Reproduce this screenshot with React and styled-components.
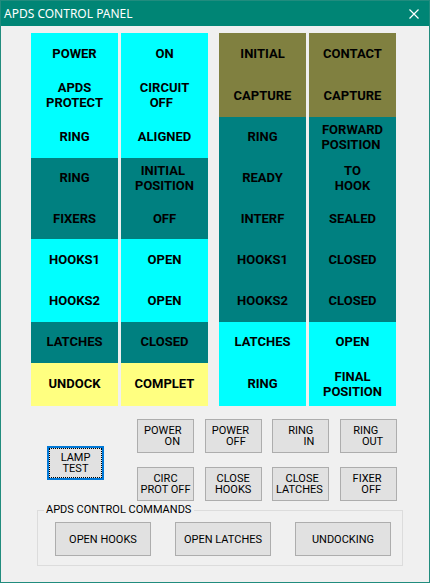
import React from "react";
import styled, { createGlobalStyle } from "styled-components";

const GlobalStyle = createGlobalStyle`
  *, *::before, *::after { box-sizing: border-box; }
  body {
    margin: 0;
    background: #f0f0f0;
    color: #000;
    font-family: Roboto, "Liberation Sans", sans-serif;
  }
`;

const lamp = {
  cyan: "#00ffff",
  teal: "#008080",
  olive: "#808040",
  yellow: "#ffff80",
};

const Window = styled.main`
  display: flex;
  flex-direction: column;
  min-height: 100vh;
  border: 1px solid #218c7e;
  background: #f0f0f0;
`;

const TitleBar = styled.header`
  display: flex;
  align-items: center;
  justify-content: space-between;
  height: 25px;
  padding: 0 10px 0 3px;
  background: #008575;
  color: #fff;
`;

const Title = styled.h1`
  margin: 0;
  font: 400 12px/16px "Noto Sans", "Open Sans", sans-serif;
`;

const CloseButton = styled.button`
  display: flex;
  padding: 0;
  border: 0;
  background: none;
  color: inherit;
`;

const Annunciator = styled.section`
  display: grid;
  grid-template-columns: 1fr 1fr;
  gap: 11px;
  padding: 7px 33px 0 30px;
`;

const LampBank = styled.div`
  display: grid;
  grid-template-columns: 1fr 1fr;
  grid-template-rows: 42px 42px 41px 41px 40px 42px 41px 41px 43px;
  column-gap: 3px;
`;

const Lamp = styled.div`
  display: flex;
  align-items: center;
  justify-content: center;
  padding-bottom: 2px;
  background: ${(p) => lamp[p.$tone]};
  font-size: 13px;
  font-weight: 700;
  line-height: 15px;
  text-align: center;
  white-space: pre;
`;

const Controls = styled.section`
  display: flex;
  align-items: center;
  justify-content: space-between;
  padding: 13px 32px 0 46px;
`;

const KeyGrid = styled.div`
  display: grid;
  grid-template-columns: repeat(4, 57px);
  justify-content: space-between;
  row-gap: 14px;
  width: 260px;
`;

const PushButton = styled.button`
  width: ${(p) => (p.$wide ? "96px" : "57px")};
  height: 34px;
  padding: 0;
  border: 1px solid #adadad;
  border-radius: 0;
  background: #e1e1e1;
  color: #000;
  font: 400 11px/11px Roboto, "Liberation Sans", sans-serif;
  text-align: center;
  white-space: pre;
`;

const DefaultButton = styled(PushButton)`
  margin-top: 6px;
  border: 2px solid #0078d7;
  outline: 1px dotted #000;
  outline-offset: -3px;
`;

const CommandGroup = styled.fieldset`
  display: flex;
  justify-content: space-between;
  min-width: 0;
  margin: 3px 26px 0 36px;
  padding: 6px 11px 9px 17px;
  border: 1px solid #dcdcdc;
`;

const GroupTitle = styled.legend`
  margin-left: -11px;
  padding: 0 3px 0 2px;
  font-size: 11px;
  line-height: 12px;
`;

const banks = [
  [
    ["POWER", "ON", "cyan"],
    ["APDS\nPROTECT", "CIRCUIT\nOFF  ", "cyan"],
    ["RING", "ALIGNED", "cyan"],
    ["RING", "INITIAL \nPOSITION", "teal"],
    ["FIXERS", "OFF", "teal"],
    ["HOOKS1", "OPEN", "cyan"],
    ["HOOKS2", "OPEN", "cyan"],
    ["LATCHES", "CLOSED", "teal"],
    ["UNDOCK", "COMPLET", "yellow"],
  ],
  [
    ["INITIAL", "CONTACT", "olive"],
    ["CAPTURE", "CAPTURE", "olive"],
    ["RING", "FORWARD\nPOSITION ", "teal"],
    ["READY", "TO\nHOOK", "teal"],
    ["INTERF", "SEALED", "teal"],
    ["HOOKS1", "CLOSED", "teal"],
    ["HOOKS2", "CLOSED", "teal"],
    ["LATCHES", "OPEN", "cyan"],
    ["RING", "FINAL\nPOSITION", "cyan"],
  ],
];

const keys = [
  "POWER  \n     ON",
  "POWER  \n  OFF",
  "RING\n      IN",
  "RING  \n   OUT",
  "CIRC\nPROT OFF",
  "CLOSE\nHOOKS",
  " CLOSE\nLATCHES ",
  "FIXER \n  OFF",
];

const commands = ["OPEN HOOKS", "OPEN LATCHES", "UNDOCKING"];

export default function App() {
  return (
    <>
      <GlobalStyle />
      <Window>
        <TitleBar>
          <Title>APDS CONTROL PANEL</Title>
          <CloseButton type="button" aria-label="Close">
            <svg width="10" height="10" viewBox="0 0 10 10" aria-hidden="true">
              <path d="M0.5 0.5 9.5 9.5M9.5 0.5 0.5 9.5" stroke="currentColor" strokeWidth="1.2" />
            </svg>
          </CloseButton>
        </TitleBar>
        <Annunciator>
          {banks.map((rows, b) => (
            <LampBank key={b}>
              {rows.map(([name, state, tone], r) => (
                <React.Fragment key={r}>
                  <Lamp $tone={tone}>{name}</Lamp>
                  <Lamp $tone={tone}>{state}</Lamp>
                </React.Fragment>
              ))}
            </LampBank>
          ))}
        </Annunciator>
        <Controls>
          <DefaultButton type="button">{"LAMP\nTEST"}</DefaultButton>
          <KeyGrid>
            {keys.map((k) => (
              <PushButton type="button" key={k}>{k}</PushButton>
            ))}
          </KeyGrid>
        </Controls>
        <CommandGroup>
          <GroupTitle>APDS CONTROL COMMANDS</GroupTitle>
          {commands.map((c) => (
            <PushButton type="button" $wide key={c}>{c}</PushButton>
          ))}
        </CommandGroup>
      </Window>
    </>
  );
}
